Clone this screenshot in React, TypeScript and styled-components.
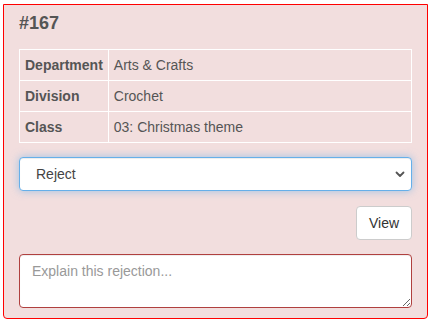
import React from "react";
import styled, { createGlobalStyle } from "styled-components";

const GlobalStyle = createGlobalStyle`
  html, body {
    margin: 0;
    padding: 0;
    background: #fff;
  }
  body {
    font-family: "Liberation Sans", Arial, sans-serif;
    font-size: 14px;
    line-height: 1.42857;
    color: #333;
  }
  * {
    box-sizing: border-box;
  }
`;

const Card = styled.div`
  margin: 4px 4px 0 3px;
  width: 425px;
  height: 315px;
  background: #f2dede;
  border: 1px solid #ff0000;
  border-radius: 0 0 4px 4px;
  padding: 8px 15px 10px;
  display: flex;
  flex-direction: column;
`;

const Title = styled.h4`
  margin: 0 0 16px;
  font-size: 18px;
  font-weight: bold;
  line-height: 20px;
  color: #555;
`;

const Table = styled.table`
  width: 100%;
  border-collapse: collapse;
  margin-bottom: 14px;
`;

const Cell = styled.td<{ $label?: boolean }>`
  border: 1px solid #fff;
  padding: 5px;
  line-height: 20px;
  color: #555;
  font-weight: ${(p) => (p.$label ? "bold" : "normal")};
  width: ${(p) => (p.$label ? "1%" : "auto")};
  white-space: nowrap;
`;

const SelectWrap = styled.div`
  position: relative;
  margin-bottom: 15px;
`;

const Select = styled.select`
  display: block;
  width: 100%;
  height: 34px;
  padding: 6px 30px 6px 16px;
  font-family: inherit;
  font-size: 14px;
  color: #444;
  background: #fff;
  border: 1px solid #66afe9;
  border-radius: 4px;
  appearance: none;
  -webkit-appearance: none;
  outline: none;
  box-shadow: inset 0 1px 1px rgba(0, 0, 0, 0.075),
    0 0 8px rgba(102, 175, 233, 0.6);
`;

const Chevron = styled.svg`
  position: absolute;
  right: 7px;
  top: 14px;
  pointer-events: none;
`;

const ButtonRow = styled.div`
  display: flex;
  justify-content: flex-end;
  margin-bottom: 14px;
`;

const Button = styled.button`
  height: 34px;
  width: 56px;
  padding: 6px 12px;
  font-family: inherit;
  font-size: 14px;
  color: #333;
  background: #fff;
  border: 1px solid #ccc;
  border-radius: 4px;
`;

const TextArea = styled.textarea`
  display: block;
  width: 100%;
  height: 54px;
  padding: 6px 12px;
  font-family: inherit;
  font-size: 14px;
  line-height: 20px;
  color: #555;
  background: #fff;
  border: 1px solid #b0403f;
  border-radius: 4px;
  box-shadow: inset 0 1px 1px rgba(0, 0, 0, 0.075);
  outline: none;

  &::placeholder {
    color: #999;
  }
`;

const rows = [
  ["Department", "Arts & Crafts"],
  ["Division", "Crochet"],
  ["Class", "03: Christmas theme"],
];

export default function App() {
  return (
    <>
      <GlobalStyle />
      <Card>
        <Title>#167</Title>
        <Table>
          <tbody>
            {rows.map(([k, v]) => (
              <tr key={k}>
                <Cell $label>{k}</Cell>
                <Cell>{v}</Cell>
              </tr>
            ))}
          </tbody>
        </Table>
        <SelectWrap>
          <Select defaultValue="reject">
            <option value="reject">Reject</option>
            <option value="approve">Approve</option>
          </Select>
          <Chevron width="10" height="7" viewBox="0 0 10 7">
            <polyline
              points="1.5,1.5 5,5 8.5,1.5"
              fill="none"
              stroke="#555"
              strokeWidth="1.8"
              strokeLinecap="round"
              strokeLinejoin="round"
            />
          </Chevron>
        </SelectWrap>
        <ButtonRow>
          <Button>View</Button>
        </ButtonRow>
        <TextArea placeholder="Explain this rejection..." />
      </Card>
    </>
  );
}
